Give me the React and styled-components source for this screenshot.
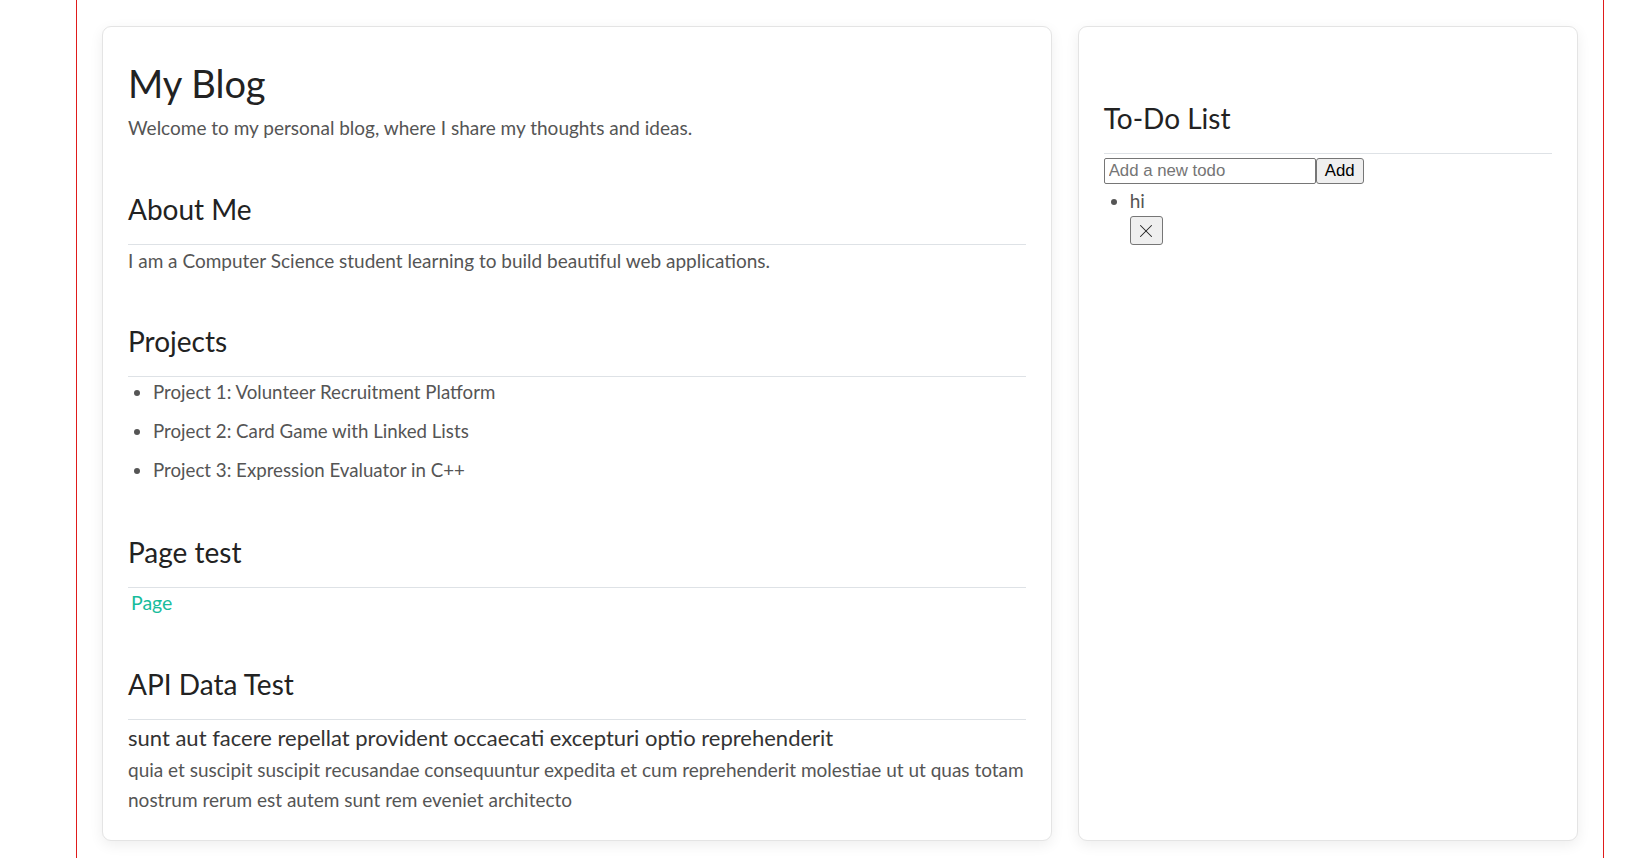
import React, { useState } from "react";
import styled, { createGlobalStyle } from "styled-components";
import { X } from "lucide-react";

const GlobalStyle = createGlobalStyle`
    * {
        box-sizing: border-box;
    }
    body {
        margin: 0;
        background: #fff;
        font-family: "Lato", "Noto Sans", sans-serif;
        color: #555;
    }
`;

const projects = [
    "Project 1: Volunteer Recruitment Platform",
    "Project 2: Card Game with Linked Lists",
    "Project 3: Expression Evaluator in C++",
];

const post = {
    title: "sunt aut facere repellat provident occaecati excepturi optio reprehenderit",
    body: "quia et suscipit suscipit recusandae consequuntur expedita et cum reprehenderit molestiae ut ut quas totam nostrum rerum est autem sunt rem eveniet architecto",
};

const TodoList = () => {
    const [todos, setTodos] = useState(["hi"]);
    const [text, setText] = useState("");

    const handleAdd = () => {
        if (!text.trim()) return;
        setTodos([...todos, text]);
        setText("");
    };

    const handleRemove = (idx) => {
        setTodos(todos.filter((_, i) => i !== idx));
    };

    return (
        <Section $gap={51}>
            <SectionTitle>To-Do List</SectionTitle>
            <TodoForm>
                <TodoInput
                    placeholder="Add a new todo"
                    value={text}
                    onChange={(e) => setText(e.target.value)}
                />
                <AddButton onClick={handleAdd}>Add</AddButton>
            </TodoForm>
            <List $indent={26}>
                {todos.map((todo, idx) => (
                    <TodoItem key={idx}>
                        {todo}
                        <RemoveButton onClick={() => handleRemove(idx)}>
                            <X size={22} strokeWidth={1.1} />
                        </RemoveButton>
                    </TodoItem>
                ))}
            </List>
        </Section>
    );
};

const App = () => {
    return (
        <>
            <GlobalStyle />
            <Page>
                <Card>
                    <BlogTitle>My Blog</BlogTitle>
                    <Intro>Welcome to my personal blog, where I share my thoughts and ideas.</Intro>

                    <Section>
                        <SectionTitle>About Me</SectionTitle>
                        <Text>I am a Computer Science student learning to build beautiful web applications.</Text>
                    </Section>

                    <Section>
                        <SectionTitle>Projects</SectionTitle>
                        <List $indent={25} $bottom={5}>
                            {projects.map((p) => (
                                <ProjectItem key={p}>{p}</ProjectItem>
                            ))}
                        </List>
                    </Section>

                    <Section>
                        <SectionTitle>Page test</SectionTitle>
                        <PageLink href="#">Page</PageLink>
                    </Section>

                    <Section>
                        <SectionTitle>API Data Test</SectionTitle>
                        <PostTitle>{post.title}</PostTitle>
                        <PostBody>{post.body}</PostBody>
                    </Section>
                </Card>

                <Card>
                    <TodoList />
                </Card>
            </Page>
        </>
    );
};

export default App;

/////////////////////
// layout
const Page = styled.div`
    margin-left: 76px;
    width: 1528px;
    min-height: 100vh;
    padding: 26px 25px 0;

    display: grid;
    grid-template-columns: 949fr 500fr;
    align-content: start;
    gap: 26px;

    border-left: 1px solid #e01b1b;
    border-right: 1px solid #e01b1b;
`;

const Card = styled.div`
    padding: 24px 25px 26px;

    background: #fff;
    border: 1px solid #e4e4e4;
    border-radius: 9px;
    box-shadow: 0 4px 14px rgba(0, 0, 0, 0.07);
`;

/////////////////////
// text
const BlogTitle = styled.h1`
    margin: 8px 0 0;
    font-size: 38px;
    line-height: 48px;
    font-weight: 400;
    color: #222;
`;

const Text = styled.p`
    margin: 1px 0 0;
    font-size: 19px;
    line-height: 29px;
    color: #555;
`;

const Intro = styled(Text)`
    margin-top: 6px;
`;

const Section = styled.section`
    margin-top: ${(p) => p.$gap || 50.5}px;
`;

const SectionTitle = styled.h2`
    margin: 0;
    padding-bottom: 17.5px;

    font-size: 28px;
    line-height: 33.6px;
    font-weight: 400;
    color: #222;

    border-bottom: 1px solid #dee2e6;
`;

const List = styled.ul`
    margin: 0 0 ${(p) => p.$bottom || 0}px;
    padding-left: ${(p) => p.$indent}px;
`;

const ProjectItem = styled.li`
    font-size: 18.7px;
    line-height: 29px;
    color: #555;

    &:first-child {
        margin-top: 1px;
    }
    & + & {
        margin-top: 10px;
    }
`;

const PageLink = styled.a`
    display: inline-block;
    margin: 0 0 1px 3px;
    font-size: 19.5px;
    line-height: 29px;
    color: #18bc9c;
    text-decoration: none;
`;

const PostTitle = styled.h5`
    margin: 6px 0 5px;
    font-size: 22px;
    line-height: 24px;
    font-weight: 400;
    color: #333;
`;

const PostBody = styled(Text)`
    margin-top: 0;
    line-height: 29.5px;
`;

/////////////////////
// todo
const TodoForm = styled.div`
    display: flex;
    margin-top: 4px;
`;

const TodoInput = styled.input`
    width: 212px;
    height: 26px;
    padding: 1px 4px;

    font-family: "Liberation Sans", Arial, sans-serif;
    font-size: 16.8px;
    color: #222;

    border: 1px solid #767676;
    border-radius: 2px;
    outline: none;

    &::placeholder {
        color: #757575;
    }
`;

const AddButton = styled.button`
    width: 48px;
    height: 26px;
    padding: 0;

    font-family: "Liberation Sans", Arial, sans-serif;
    font-size: 16.8px;
    color: #000;

    background: #efefef;
    border: 1px solid #767676;
    border-radius: 3px;
`;

const TodoItem = styled.li`
    margin-top: 2px;
    font-size: 19px;
    line-height: 29px;
    color: #555;
`;

const RemoveButton = styled.button`
    display: flex;
    align-items: center;
    justify-content: center;

    width: 33px;
    height: 29px;
    margin-top: 1px;
    padding: 0;

    color: #222;
    background: #efefef;
    border: 1px solid #767676;
    border-radius: 3px;
`;
